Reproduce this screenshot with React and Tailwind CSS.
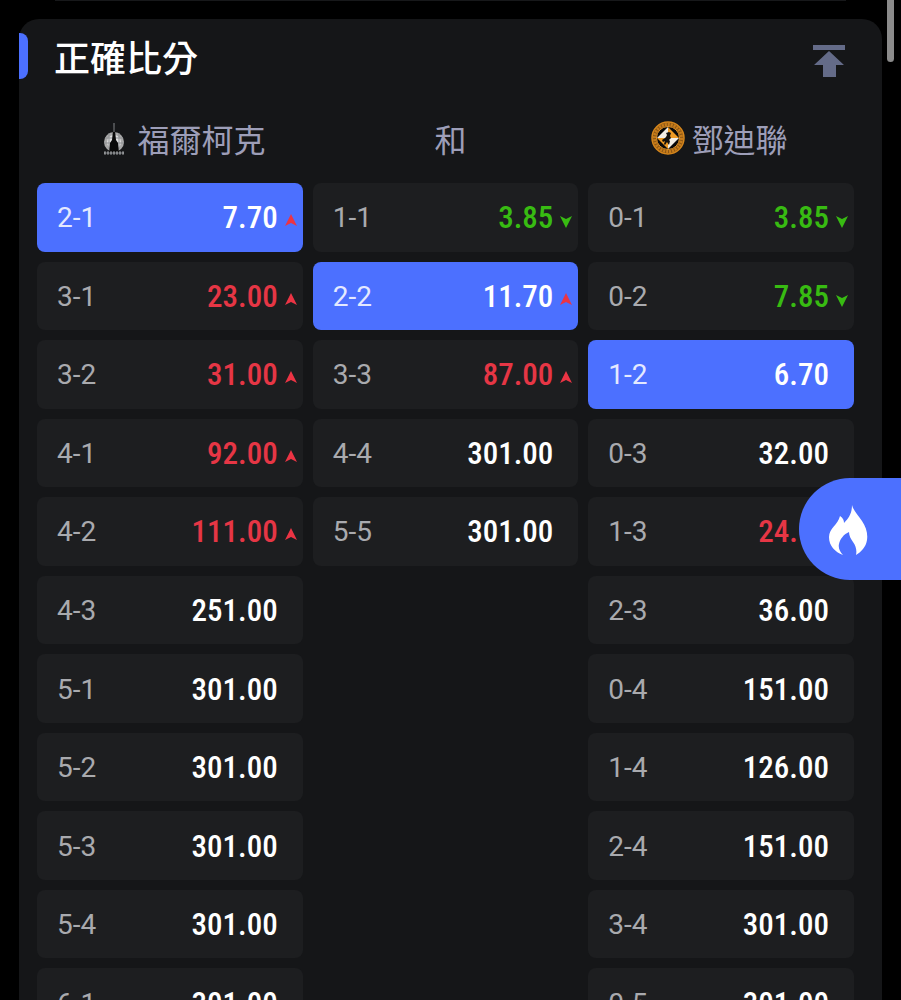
import { useState } from "react";
import clsx from "clsx";

const columns = [
  {
    id: "home",
    name: "福爾柯克",
    Logo: FalkirkLogo,
    items: [
      { score: "2-1", odds: "7.70", trend: "up" },
      { score: "3-1", odds: "23.00", trend: "up" },
      { score: "3-2", odds: "31.00", trend: "up" },
      { score: "4-1", odds: "92.00", trend: "up" },
      { score: "4-2", odds: "111.00", trend: "up" },
      { score: "4-3", odds: "251.00" },
      { score: "5-1", odds: "301.00" },
      { score: "5-2", odds: "301.00" },
      { score: "5-3", odds: "301.00" },
      { score: "5-4", odds: "301.00" },
      { score: "6-1", odds: "301.00" },
    ],
  },
  {
    id: "draw",
    name: "和",
    items: [
      { score: "1-1", odds: "3.85", trend: "down" },
      { score: "2-2", odds: "11.70", trend: "up" },
      { score: "3-3", odds: "87.00", trend: "up" },
      { score: "4-4", odds: "301.00" },
      { score: "5-5", odds: "301.00" },
    ],
  },
  {
    id: "away",
    name: "鄧迪聯",
    Logo: DundeeLogo,
    items: [
      { score: "0-1", odds: "3.85", trend: "down" },
      { score: "0-2", odds: "7.85", trend: "down" },
      { score: "1-2", odds: "6.70" },
      { score: "0-3", odds: "32.00" },
      { score: "1-3", odds: "24.00", trend: "up" },
      { score: "2-3", odds: "36.00" },
      { score: "0-4", odds: "151.00" },
      { score: "1-4", odds: "126.00" },
      { score: "2-4", odds: "151.00" },
      { score: "3-4", odds: "301.00" },
      { score: "0-5", odds: "301.00" },
    ],
  },
];

function FalkirkLogo() {
  return (
    <svg className="size-[34px] shrink-0" viewBox="0 0 34 34" aria-hidden="true">
      <circle cx="17" cy="21" r="10" fill="#a9a9a9" />
      <circle cx="17" cy="21" r="7" fill="#e0e0e0" />
      <path d="M8 17h18M7 22h20M12 12v16M22 12v16" stroke="#8d8f92" strokeWidth="1" />
      <path d="M17 4l1 6 1 9 2 3 1 10H12l1-10 2-3 1-9z" fill="#090909" />
      <path d="M17 2v9" stroke="#85878a" strokeWidth="1" />
      <path d="M7 32h20" stroke="#929496" strokeWidth="3" strokeDasharray="2 1" />
      <path d="M8 32h18" stroke="#77797c" strokeWidth="1" />
    </svg>
  );
}

function DundeeLogo() {
  return (
    <svg className="size-[34px] shrink-0" viewBox="0 0 34 34" aria-hidden="true">
      <circle cx="17" cy="17" r="16" fill="#8a5615" stroke="#d5861c" strokeWidth="1.5" />
      <circle cx="17" cy="17" r="13.5" fill="none" stroke="#c77c1b" strokeWidth="3" strokeDasharray="2 1" />
      <circle cx="17" cy="17" r="11.5" fill="#090909" stroke="#e6962a" strokeWidth="1" />
      <path d="M17 6v11H6z" fill="#f3eee5" />
      <path d="M17 6l11 11H17z" fill="#ee9a25" />
      <path d="M6 17h11v11z" fill="#ee9a25" />
      <path d="M28 17L17 28V17z" fill="#f3eee5" />
      <path d="M18 11l2 1-1 3 1 2-2 2 1 1-1 4-2-3-2 3-1-1 1-3-2 1-1-2 3-2 1-1 1-2-1-2z" fill="#14110d" />
    </svg>
  );
}

function TrendArrow({ trend }) {
  return (
    <svg
      className={clsx("size-3 shrink-0", trend === "down" && "mt-1 rotate-180")}
      viewBox="0 0 12 12"
      aria-hidden="true"
    >
      <path d="M6 0l6 12-6-3-6 3z" fill={trend === "up" ? "#ec3444" : "#38bb12"} />
    </svg>
  );
}

function OddsButton({ item, selected, onToggle }) {
  return (
    <button
      type="button"
      aria-pressed={selected}
      onClick={onToggle}
      className={clsx(
        "flex items-center justify-between rounded-lg pt-0.5 pr-1.5 pl-5",
        selected ? "bg-[#4c70ff]" : "bg-[#1d1e20]"
      )}
    >
      <span
        className={clsx(
          "font-[Roboto,sans-serif] text-[28px] leading-9",
          selected ? "text-[#e4e9ff]" : "text-[#a9aaae]"
        )}
      >
        {item.score}
      </span>
      <span className="flex items-center gap-[7px]">
        <span
          className={clsx(
            "font-['Roboto_Condensed',Roboto,sans-serif] text-[31px] leading-9 font-medium",
            selected && "text-white",
            !selected && !item.trend && "text-white",
            !selected && item.trend === "up" && "text-[#e63645]",
            !selected && item.trend === "down" && "text-[#38bb12]"
          )}
        >
          {item.odds}
        </span>
        <span className="w-3 pt-1">{item.trend && <TrendArrow trend={item.trend} />}</span>
      </span>
    </button>
  );
}

function App() {
  const [selected, setSelected] = useState(["2-1", "2-2", "1-2"]);

  const handleToggle = (score) => {
    setSelected(
      selected.includes(score) ? selected.filter((s) => s !== score) : [...selected, score]
    );
  };

  return (
    <div className="relative h-screen overflow-hidden bg-black font-['Noto_Sans_CJK_TC',sans-serif]">
      <main className="h-full overflow-y-auto px-[19px] [scrollbar-width:none]">
        <div className="mx-9 h-px bg-[#17181a]" />
        <section className="mt-[18px] rounded-[20px] bg-[#151618] pr-7 pb-5 pl-[18px]">
          <header className="-ml-[18px] flex h-[74px] items-center justify-between pr-2">
            <div className="flex items-center gap-[26px]">
              <span className="h-[46px] w-[9px] rounded-r-lg bg-[#4c70ff]" />
              <h1 className="text-4xl font-medium text-white">正確比分</h1>
            </div>
            <button type="button" aria-label="收起" className="mt-2.5 text-[#646b88]">
              <svg className="h-[34px] w-[34px]" viewBox="0 0 34 34" fill="currentColor" aria-hidden="true">
                <path d="M1 1h32v5H1zM17 7l15 14h-8v12H11V21H2z" />
              </svg>
            </button>
          </header>

          <div className="grid h-[90px] grid-cols-3 pl-2.5">
            {columns.map(({ id, name, Logo }) => (
              <h2
                key={id}
                id={id}
                className="flex items-center justify-center gap-1.5 text-[32px] leading-10 text-[#9d9eb8]"
              >
                {Logo && <Logo />}
                {name}
              </h2>
            ))}
          </div>

          <div className="grid min-h-[854px] grid-cols-3 grid-rows-[repeat(11,1fr)] gap-[10px]">
            {columns.map(({ id, items }) => (
              <div key={id} role="group" aria-labelledby={id} className="row-span-full grid grid-rows-subgrid">
                {items.map((item) => (
                  <OddsButton
                    key={item.score}
                    item={item}
                    selected={selected.includes(item.score)}
                    onToggle={() => handleToggle(item.score)}
                  />
                ))}
              </div>
            ))}
          </div>
        </section>
      </main>

      <div className="absolute top-0 right-[7px] h-[62px] w-[7px] rounded-b-full bg-[#8b8b8b]" />

      <button
        type="button"
        aria-label="熱門"
        className="absolute top-[478px] right-0 flex h-[102px] w-[102px] items-center rounded-l-full bg-[#4c70ff] pt-1 pl-[30px]"
      >
        <svg className="h-[52px] w-10" viewBox="0 0 40 52" fill="#fff" aria-hidden="true">
          <path d="M23 0c1 5 6 10 10 16 4 6 6 12 5 19-1 7-6 12-11 15 1-4 0-9-3-13-2-3-4-6-4-10-5 2-9 7-10 12-1 4 1 8 4 11C6 47 0 41 0 32c0-9 9-12 11-21 3 2 4 4 4 7 5-5 8-10 8-18z" />
        </svg>
      </button>
    </div>
  );
}

export default App;
